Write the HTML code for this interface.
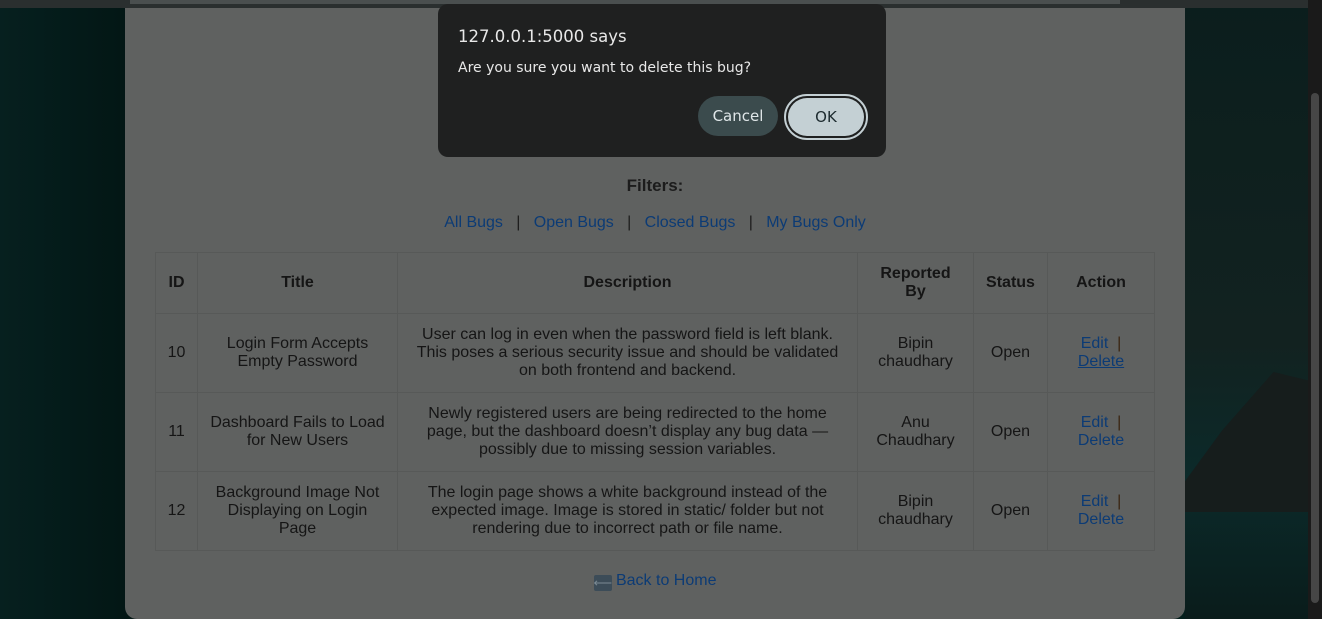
<!DOCTYPE html>
<html><head><meta charset="utf-8"><style>
*{box-sizing:border-box;margin:0;padding:0}
body{width:1322px;height:619px;overflow:hidden;position:relative;font-family:"Liberation Sans",sans-serif;background:linear-gradient(90deg,#06201f 0%,#021412 12%,#04201d 100%)}
.bgr{position:absolute;left:1185px;top:0;width:123px;height:619px;background:linear-gradient(180deg,#0b1e1d 0%,#122220 55%,#0b2a2a 78%,#0a1c1b 100%)}
.rock{position:absolute;left:1185px;top:372px;width:123px;height:140px;background:#161d1c;clip-path:polygon(0 78%,30% 42%,72% 0,100% 6%,100% 100%,0 100%)}
.topbar{position:absolute;left:130px;top:0;width:990px;height:4px;background:#4a4f4f}
.topstrip{position:absolute;left:0;top:0;width:1308px;height:8px;background:#2a2f2f}
.sb{position:absolute;left:1308px;top:0;width:14px;height:619px;background:#1a1a1a}
.sb i{position:absolute;left:3px;top:93px;width:8px;height:510px;background:#464646;border-radius:4px}
.panel{position:absolute;left:125px;top:8px;width:1060px;height:611px;background:#5f6160;border-radius:0 0 12px 12px}
h3{position:absolute;top:168px;left:0;width:100%;text-align:center;font-size:17px;color:#1c1c1c}
.f{position:absolute;top:206px;left:0;width:100%;text-align:center;font-size:16px;color:#1c1c1c}
a{color:#0c3b75;text-decoration:none}
table{position:absolute;left:30px;top:244px;border-collapse:collapse;font-size:16px;color:#151515}
td,th{border:1px solid #575958;text-align:center;vertical-align:middle;line-height:18px}
th{height:61px}
td{height:79px}
.u{text-decoration:underline}
.back{position:absolute;top:564px;left:0;width:100%;text-align:center;font-size:16px}
.ar{display:inline-block;width:18px;height:16px;background:#3c4c58;color:#7b8a94;font-size:13px;line-height:16px;vertical-align:-2px;border-radius:2px}
.dlg{position:absolute;left:438px;top:4px;width:448px;height:153px;background:#1f2020;border-radius:10px;color:#e8e8e8;font-family:"DejaVu Sans","Liberation Sans",sans-serif}
.dlg .t{position:absolute;left:20px;top:23px;font-size:16.5px;font-weight:500}
.dlg .m{position:absolute;left:20px;top:56px;font-size:14px}
.c{position:absolute;left:260px;top:92px;width:80px;height:40px;border-radius:20px;background:#3b4b4d;color:#dfe6e8;font-size:15px;text-align:center;line-height:40px}
.ok{position:absolute;left:346px;top:90px;width:84px;height:46px;border-radius:23px;border:2px solid #c4d0d4;padding:2px}
.ok div{width:100%;height:100%;border-radius:20px;background:#c4d0d4;color:#1c2a2e;font-size:15px;text-align:center;line-height:38px}
</style></head><body>
<div class="bgr"></div><div class="rock"></div>
<div class="topstrip"></div><div class="topbar"></div>
<div class="panel">
<h3>Filters:</h3>
<div class="f"><a>All Bugs</a> &nbsp;&nbsp;|&nbsp;&nbsp; <a>Open Bugs</a> &nbsp;&nbsp;|&nbsp;&nbsp; <a>Closed Bugs</a> &nbsp;&nbsp;|&nbsp;&nbsp; <a>My Bugs Only</a></div>
<table>
<tr><th style="width:42px">ID</th><th style="width:200px">Title</th><th style="width:460px">Description</th><th style="width:116px">Reported<br>By</th><th style="width:74px">Status</th><th style="width:107px">Action</th></tr>
<tr><td>10</td><td>Login Form Accepts<br>Empty Password</td><td>User can log in even when the password field is left blank.<br>This poses a serious security issue and should be validated<br>on both frontend and backend.</td><td>Bipin<br>chaudhary</td><td>Open</td><td><a>Edit</a> &nbsp;<span style="color:#3a2410">|</span><br><a class="u">Delete</a></td></tr>
<tr><td>11</td><td>Dashboard Fails to Load<br>for New Users</td><td>Newly registered users are being redirected to the home<br>page, but the dashboard doesn’t display any bug data —<br>possibly due to missing session variables.</td><td>Anu<br>Chaudhary</td><td>Open</td><td><a>Edit</a> &nbsp;<span style="color:#3a2410">|</span><br><a>Delete</a></td></tr>
<tr><td>12</td><td>Background Image Not<br>Displaying on Login<br>Page</td><td>The login page shows a white background instead of the<br>expected image. Image is stored in static/ folder but not<br>rendering due to incorrect path or file name.</td><td>Bipin<br>chaudhary</td><td>Open</td><td><a>Edit</a> &nbsp;<span style="color:#3a2410">|</span><br><a>Delete</a></td></tr>
</table>
<div class="back"><span class="ar">⟵</span> <a>Back to Home</a></div>
</div>
<div class="sb"><i></i></div>
<div class="dlg"><div class="t">127.0.0.1:5000 says</div><div class="m">Are you sure you want to delete this bug?</div><div class="c">Cancel</div><div class="ok"><div>OK</div></div></div>
</body></html>
